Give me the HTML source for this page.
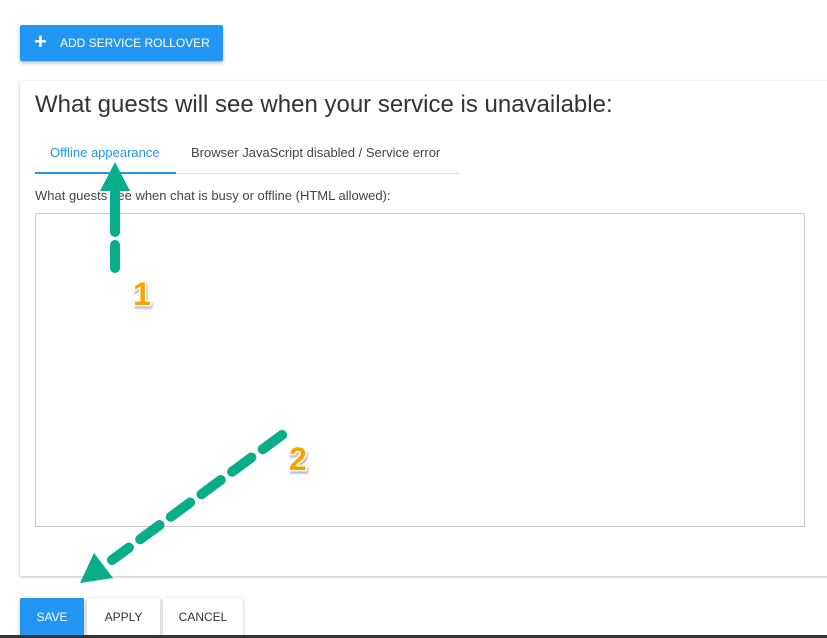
<!DOCTYPE html>
<html><head><style>
body{margin:0;width:827px;height:638px;background:#fff;font-family:"Liberation Sans",sans-serif;position:relative;overflow:hidden}
.abs{position:absolute}
.btn{position:absolute;top:598px;height:38px;box-shadow:0 1px 3px rgba(0,0,0,.3);border-radius:2px;font-size:12px;line-height:38px;text-align:center;color:#333;background:#fff}
</style></head><body>
<div class="abs" style="left:20px;top:25px;width:203px;height:36px;background:#2196f3;border-radius:2px;box-shadow:0 2px 3px rgba(0,0,0,.3);color:#fff;font-size:12px;line-height:36px">
<span style="position:absolute;left:14px;top:-1px;font-size:22px;font-weight:bold">+</span><span style="position:absolute;left:40px">ADD SERVICE ROLLOVER</span></div>
<div class="abs" style="left:20px;top:81px;width:820px;height:495px;box-shadow:0 1px 3px rgba(0,0,0,.25);background:#fff"></div>
<div class="abs" style="left:35px;top:91px;font-size:24px;color:#333">What guests will see when your service is unavailable:</div>
<div class="abs" style="left:50px;top:145px;font-size:13px;color:#2196f3">Offline appearance</div>
<div class="abs" style="left:191px;top:145px;font-size:13px;color:#444">Browser JavaScript disabled / Service error</div>
<div class="abs" style="left:35px;top:173px;width:424px;height:1px;background:#ddd"></div>
<div class="abs" style="left:35px;top:172px;width:141px;height:2px;background:#2196f3"></div>
<div class="abs" style="left:35px;top:188px;font-size:13px;color:#444">What guests see when chat is busy or offline (HTML allowed):</div>
<div class="abs" style="left:35px;top:213px;width:768px;height:312px;border:1px solid #ccc"></div>
<div class="btn" style="left:20px;width:64px;background:#2196f3;color:#fff">SAVE</div>
<div class="btn" style="left:87px;width:73px">APPLY</div>
<div class="btn" style="left:163px;width:80px">CANCEL</div>
<div class="abs" style="left:0;top:635px;width:827px;height:3px;background:#333"></div>
<svg class="abs" style="left:0;top:0" width="827" height="638">
<g stroke="#08ad8a" stroke-width="10" stroke-linecap="round" fill="none">
<line x1="115" y1="268" x2="115" y2="245"/>
<line x1="115" y1="232" x2="115" y2="192"/>
<line x1="282" y1="435" x2="112" y2="560" stroke-dasharray="24 14"/>
</g>
<polygon points="115,162 100,191 130,191" fill="#08ad8a"/>
<polygon points="80,583 94,553 113,578" fill="#08ad8a"/>
<g font-family="Liberation Sans" font-weight="bold" font-size="32" fill="#f6a400" stroke="#fff" stroke-width="3" paint-order="stroke" style="filter:drop-shadow(1px 2px 1px rgba(0,0,0,.3))">
<text x="133" y="305">1</text><text x="289" y="470">2</text></g>
</svg>
</body></html>
